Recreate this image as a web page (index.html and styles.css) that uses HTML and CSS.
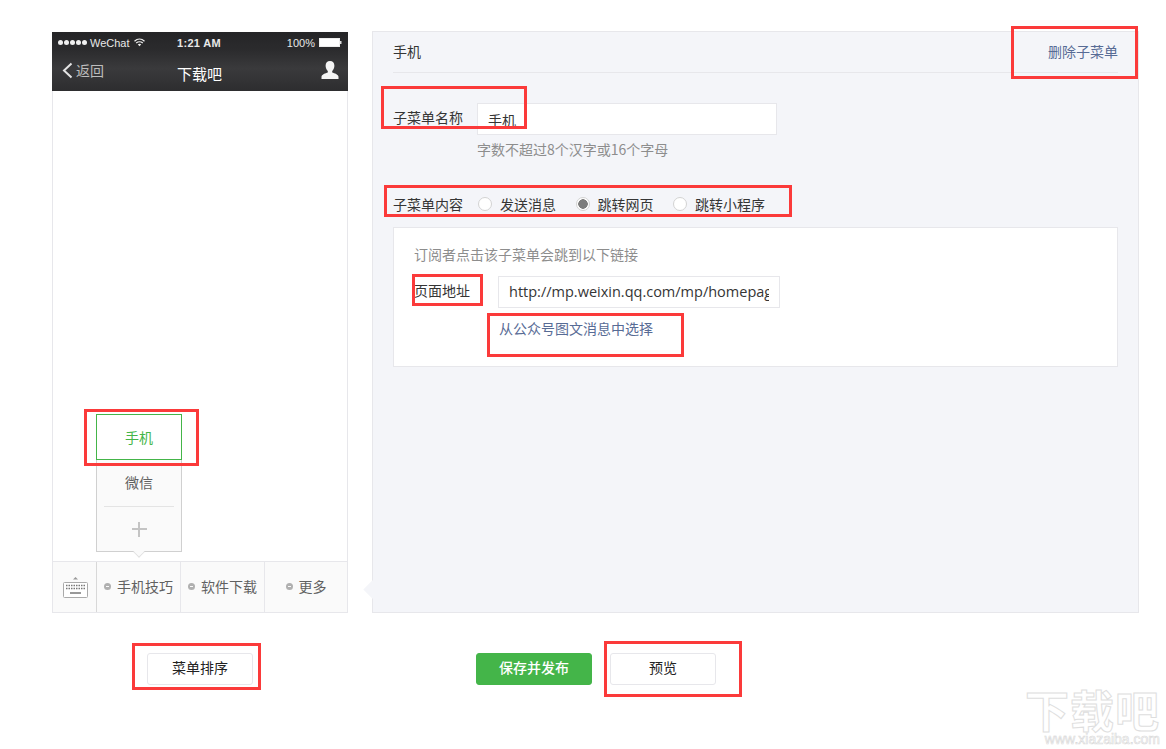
FILE: index.html
```html
<!DOCTYPE html>
<html lang="zh">
<head>
<meta charset="utf-8">
<title>下载吧</title>
<link rel="stylesheet" href="styles.css">
</head>
<body>
<div class="page">
  <div class="editor">
    <section class="phone">
      <header class="phone-head">
        <div class="status">
          <span class="status-left"><span class="dots"><i></i><i></i><i></i><i></i><i></i></span>WeChat
            <svg class="wifi" width="11" height="9" viewBox="0 0 11 9"><path d="M.5 3.2C3.5.4 7.5.4 10.5 3.2M2.2 5C4 3.4 7 3.4 8.8 5" fill="none" stroke="#eee" stroke-width="1.2"/><path d="M3.8 6.4c1-.8 2.4-.8 3.4 0L5.5 8.3z" fill="#eee"/></svg>
          </span>
          <span class="status-time">1:21 AM</span>
          <span class="status-right">100%
            <svg width="23" height="9" viewBox="0 0 23 9"><rect x=".5" y=".5" width="20" height="8" fill="#fff" stroke="#eee"/><rect x="21" y="3" width="1.5" height="3" fill="#ddd"/></svg>
          </span>
        </div>
        <div class="nav">
          <span class="back">
            <svg width="11" height="17" viewBox="0 0 11 17"><path d="M9.5 1.500 2 8.500l7.500 7" fill="none" stroke="#e4e4e4" stroke-width="2"/></svg>
            返回
          </span>
          <span class="nav-title">下载吧</span>
          <svg class="person" width="18" height="18" viewBox="0 0 18 18"><path d="M9 0c2.800 0 4.400 2 4.400 4.800 0 2.200-1 4-2.200 5.200v1.500c2.200.8 6.300 2 6.300 4.300V18H.5v-2.200c0-2.300 4.100-3.500 6.300-4.300V10C5.600 8.800 4.600 7 4.600 4.800 4.600 2 6.200 0 9 0z" fill="#f4f4f4"/></svg>
        </div>
      </header>
      <div class="phone-body">
        <div class="submenu">
          <div class="sub-item sub-active">手机</div>
          <div class="sub-item">微信</div>
          <div class="sub-add"><span class="plus"></span></div>
          <span class="sub-arrow"></span>
        </div>
      </div>
      <nav class="tabbar">
        <div class="tab-kbd">
          <svg width="25" height="21" viewBox="0 0 25 21">
            <path d="M12.500 0l2.500 2.500h-5z" fill="#999"/>
            <rect x=".5" y="5.500" width="24" height="15" rx="1" fill="#fff" stroke="#aaa"/>
            <path d="M3 8.500h19M3 11.500h19" stroke="#777" stroke-width="1.500" stroke-dasharray="1.500 1"/>
            <path d="M7 16h11" stroke="#999" stroke-width="2"/>
          </svg>
        </div>
        <div class="tab"><span class="tab-dot"></span>手机技巧</div>
        <div class="tab"><span class="tab-dot"></span>软件下载</div>
        <div class="tab"><span class="tab-dot"></span>更多</div>
      </nav>
    </section>

    <section class="panel">
      <span class="panel-arrow"></span>
      <div class="panel-head">
        <span>手机</span>
        <a class="link">删除子菜单</a>
      </div>
      <div class="name-row">
        <span class="label">子菜单名称</span>
        <div class="field field-name">手机</div>
      </div>
      <p class="hint">字数不超过8个汉字或16个字母</p>
      <div class="radio-row">
        <span class="label">子菜单内容</span>
        <span class="radio-opt"><i class="radio"></i>发送消息</span>
        <span class="radio-opt"><i class="radio radio-on"></i>跳转网页</span>
        <span class="radio-opt"><i class="radio"></i>跳转小程序</span>
      </div>
      <div class="url-box">
        <p class="url-tip">订阅者点击该子菜单会跳到以下链接</p>
        <div class="url-row">
          <span class="url-label">页面地址</span>
          <div class="field field-url"><span class="url-clip">http://mp.weixin.qq.com/mp/homepage</span></div>
        </div>
        <a class="link url-link">从公众号图文消息中选择</a>
      </div>
    </section>
  </div>

  <div class="actions">
    <button class="btn btn-sort">菜单排序</button>
    <button class="btn btn-green">保存并发布</button>
    <button class="btn btn-preview">预览</button>
  </div>
</div>

<span class="mark mark-delete"></span>
<span class="mark mark-name"></span>
<span class="mark mark-content"></span>
<span class="mark mark-addr"></span>
<span class="mark mark-pick"></span>
<span class="mark mark-sub"></span>
<span class="mark mark-sort"></span>
<span class="mark mark-preview"></span>

<div class="watermark">
  <span class="wm-big">下载吧</span>
  <span class="wm-small">www.xiazaiba.com</span>
</div>
</body>
</html>
```

FILE: styles.css
```css
* { box-sizing: border-box; }
html, body { margin: 0; height: 749px; overflow: hidden; background: #fff; }
body {
  position: relative;
  font-family: "Noto Sans CJK SC", "Liberation Sans", sans-serif;
  font-size: 14px;
  color: #353535;
}
p { margin: 0; }
.page { padding: 31px 0 0 52px; }
.editor { display: flex; gap: 24px; align-items: flex-start; }

/* Phone */
.phone {
  width: 296px;
  height: 581px;
  margin-top: 1px;
  border: 1px solid #e7e7eb;
  border-top: 0;
  display: flex;
  flex-direction: column;
}
.phone-head {
  margin: 0 -1px;
  height: 59px;
  background: linear-gradient(#252527 0, #2b2b2d 30%, #3a3a3c 62%, #2d2d2f 100%);
  color: #e8e8e8;
  font-family: "Liberation Sans", sans-serif;
}
.status {
  height: 21px;
  padding: 0 6px;
  display: grid;
  grid-template-columns: 1fr auto 1fr;
  align-items: center;
  font-size: 11px;
}
.status-left { display: flex; align-items: center; gap: 3px; }
.dots { display: flex; gap: 1px; margin-right: 0; }
.dots i { width: 5px; height: 5px; border-radius: 50%; background: #f0f0f0; }
.wifi { margin-left: 1px; }
.status-time { font-weight: bold; font-size: 11px; letter-spacing: .3px; margin-left: -2px; }
.status-right { display: flex; justify-content: flex-end; align-items: center; gap: 4px; }
.nav {
  height: 38px;
  position: relative;
  display: flex;
  align-items: center;
  justify-content: space-between;
  padding: 0 9px 4px 10px;
}
.back {
  display: flex;
  align-items: center;
  gap: 3px;
  color: #bdbdbd;
  font-family: "Noto Sans CJK SC", sans-serif;
  font-size: 14px;
}
.nav-title {
  position: absolute;
  left: 0;
  right: 0;
  top: 9px;
  margin-left: -1px;
  text-align: center;
  color: #fff;
  font-family: "Noto Sans CJK SC", sans-serif;
  font-size: 15px;
  line-height: 24px;
}
.phone-body {
  flex: 1;
  display: flex;
  align-items: flex-end;
  padding: 0 0 9px 43px;
}
.submenu {
  position: relative;
  width: 86px;
  height: 138px;
  background: #fafafa;
  border: 1px solid #d0d0d0;
  border-top: 0;
  text-align: center;
}
.sub-item { height: 46px; line-height: 44px; color: #616161; }
.sub-active {
  background: #fff;
  border: 1px solid #44b549;
  color: #44b549;
  margin: 0 -1px;
}
.sub-add {
  margin: 0 7px;
  height: 45px;
  border-top: 1px solid #e4e4e4;
  display: flex;
  align-items: center;
  justify-content: center;
}
.plus {
  position: relative;
  width: 15px;
  height: 15px;
  background:
    linear-gradient(#c4c4c4, #c4c4c4) center / 15px 2px no-repeat,
    linear-gradient(#c4c4c4, #c4c4c4) center / 2px 15px no-repeat;
}
.sub-arrow {
  position: absolute;
  left: 37px;
  bottom: -6px;
  width: 10px;
  height: 10px;
  background: #fafafa;
  border-right: 1px solid #e0e0e0;
  border-bottom: 1px solid #e0e0e0;
  transform: rotate(45deg) scale(.8);
}
.tabbar {
  height: 51px;
  display: flex;
  background: #fafafa;
  border-top: 1px solid #e7e7eb;
  color: #616161;
  line-height: 48px;
}
.tab-kbd {
  width: 44px;
  display: flex;
  align-items: center;
  justify-content: center;
  border-right: 1px solid #d8d8d8;
  padding-left: 1px;
}
.tab {
  width: 84px;
  display: flex;
  align-items: center;
  justify-content: center;
  gap: 6px;
  border-right: 1px solid #e7e7eb;
  padding-bottom: 2px;
}
.tab:last-child { border-right: 0; flex: 1; }
.tab-dot {
  position: relative;
  width: 7px;
  height: 7px;
  border-radius: 50%;
  background: linear-gradient(#fafafa, #fafafa) center / 3px 1px no-repeat, #b0b0b0;
}

/* Panel */
.panel {
  position: relative;
  width: 767px;
  height: 582px;
  padding: 0 20px;
  background: #f4f5f9;
  border: 1px solid #e7e7eb;
}
.panel-arrow {
  position: absolute;
  left: -7px;
  top: 551px;
  width: 13px;
  height: 13px;
  background: #f4f5f9;
  transform: rotate(45deg);
}
.panel-head {
  height: 41px;
  display: flex;
  justify-content: space-between;
  align-items: center;
  border-bottom: 1px solid #e7e7eb;
  padding-bottom: 3px;
}
.link { color: #576b95; }
.name-row {
  margin-top: 30px;
  display: flex;
  align-items: flex-start;
  gap: 14px;
}
.label { line-height: 28px; }
.field {
  background: #fff;
  border: 1px solid #e7e7eb;
}
.field-name {
  width: 300px;
  height: 32px;
  padding: 4px 10px 0;
  line-height: 24px;
}
.hint { margin: 3px 0 0 84px; color: #8d8d8d; line-height: 22px; }
.radio-row {
  margin-top: 32px;
  height: 24px;
  display: flex;
  align-items: center;
  color: #353535;
}
.radio-opt { display: flex; align-items: center; gap: 8px; margin-right: 19.5px; }
.radio-row .label { margin-right: 15px; }
.radio {
  width: 14px;
  height: 14px;
  border-radius: 50%;
  background: #fff;
  border: 1px solid #d3d3d3;
}
.radio-on { background: radial-gradient(circle, #7d7d7d 0 4.500px, #fff 5px); }
.url-box {
  margin-top: 11px;
  width: 725px;
  height: 140px;
  background: #fff;
  border: 1px solid #e7e7eb;
  padding: 16px 20px 0;
}
.url-tip { color: #8d8d8d; line-height: 21px; }
.url-row { margin-top: 11px; display: flex; align-items: flex-start; gap: 28px; }
.url-label { line-height: 28px; }
.field-url {
  width: 282px;
  height: 32px;
  padding: 0 10px;
  font-family: "Open Sans", sans-serif;
  font-size: 14.5px;
}
.url-clip { display: block; overflow: hidden; white-space: nowrap; height: 30px; line-height: 30px; }
.url-link { display: block; margin: 9px 0 0 85px; line-height: 22px; }

/* Actions */
.actions { display: flex; margin-top: 40px; padding-left: 95px; }
.btn {
  height: 32px;
  font: inherit;
  color: #222;
  background: #fff;
  border: 1px solid #e7e7eb;
  border-radius: 3px;
  padding: 0 0 4px;
}
.btn-sort { width: 106px; margin-right: 223px; }
.btn-green {
  width: 116px;
  margin-right: 18px;
  background: #44b549;
  border-color: #44b549;
  color: #fff;
  font-weight: 500;
}
.btn-preview { width: 106px; }

/* Red annotation rectangles */
.mark { position: absolute; border: 3px solid #fb3a3a; }
.mark-delete { left: 1011px; top: 26px; width: 127px; height: 53px; }
.mark-name { left: 381px; top: 86px; width: 146px; height: 43px; }
.mark-content { left: 384px; top: 185px; width: 408px; height: 32px; }
.mark-addr { left: 412px; top: 274px; width: 71px; height: 32px; }
.mark-pick { left: 487px; top: 313px; width: 197px; height: 44px; }
.mark-sub { left: 84px; top: 409px; width: 115px; height: 57px; }
.mark-sort { left: 132px; top: 643px; width: 129px; height: 47px; }
.mark-preview { left: 604px; top: 641px; width: 138px; height: 56px; }

/* Watermark */
.watermark {
  position: absolute;
  left: 1024px;
  top: 687px;
  width: 136px;
  text-align: right;
  pointer-events: none;
}
.wm-big {
  display: block;
  height: 45px;
  font-size: 44px;
  line-height: 45px;
  font-weight: 700;
  letter-spacing: 1px;
  color: #fff;
  -webkit-text-stroke: 1px #dedede;
}
.wm-small {
  display: block;
  height: 14px;
  font-family: "Liberation Sans", sans-serif;
  font-size: 14px;
  line-height: 14px;
  color: #fff;
  -webkit-text-stroke: .6px #d8d8d8;
}
```
